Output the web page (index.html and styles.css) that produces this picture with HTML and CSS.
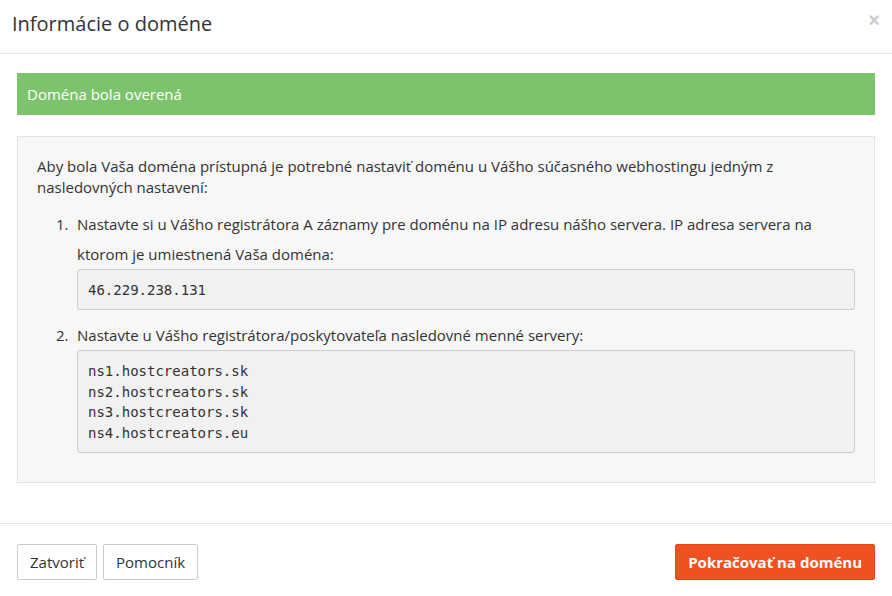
FILE: index.html
```html
<!DOCTYPE html>
<html lang="sk">
<head>
  <meta charset="UTF-8"/>
  <meta name="viewport" content="width=device-width, initial-scale=1.0"/>
  <title>Informácie o doméne</title>
  <link rel="stylesheet" href="styles.css">
</head>
<body>

  <div class="modal">
    <div class="modal-header">
      <h4 class="modal-title">Informácie o doméne</h4>
      <button class="close" type="button">&times;</button>
    </div>

    <div class="modal-body">
      <div class="alert-success">Doména bola overená</div>

      <div class="well">
        <p>Aby bola Vaša doména prístupná je potrebné nastaviť doménu u Vášho súčasného webhostingu jedným z nasledovných nastavení:</p>
        <ol class="steps">
          <li>Nastavte si u Vášho registrátora A záznamy pre doménu na IP adresu nášho servera. IP adresa servera na ktorom je umiestnená Vaša doména:
            <pre>46.229.238.131</pre>
          </li>
          <li>Nastavte u Vášho registrátora/poskytovateľa nasledovné menné servery:
            <pre>ns1.hostcreators.sk
ns2.hostcreators.sk
ns3.hostcreators.sk
ns4.hostcreators.eu</pre>
          </li>
        </ol>
      </div>
    </div>

    <div class="modal-footer">
      <div class="footer-left">
        <button class="btn" type="button">Zatvoriť</button>
        <button class="btn" type="button">Pomocník</button>
      </div>
      <button class="btn btn-primary" type="button">Pokračovať na doménu</button>
    </div>
  </div>

</body>
</html>
```

FILE: styles.css
```css
body {
  margin: 0;
  font-family: 'Open Sans', sans-serif;
  font-size: 15px;
  line-height: 1.42857;
  color: #333;
  background: #fff;
}

.modal {
  width: 892px;
  background: #fff;
}

.modal-header {
  display: flex;
  justify-content: space-between;
  align-items: flex-start;
  padding: 9px 12px 0 12px;
  height: 44px;
  border-bottom: 1px solid #e5e5e5;
}

.modal-title {
  margin: 0;
  font-size: 20px;
  font-weight: 400;
  line-height: 30px;
  color: #333;
}

.close {
  border: 0;
  background: none;
  padding: 0;
  margin-top: 1px;
  font-family: 'Liberation Sans', sans-serif;
  font-size: 20px;
  font-weight: 700;
  line-height: 1;
  color: #000;
  opacity: 0.2;
  cursor: pointer;
}

.modal-body {
  padding: 19px 17px 20px;
}

.alert-success {
  background: #7dc36d;
  color: #fff;
  padding: 10px 10px;
  line-height: 22px;
  margin-bottom: 21px;
}

.well {
  background: #f7f7f7;
  border: 1px solid #e3e3e3;
  padding: 19px;
  margin-bottom: 20px;
}

.well p {
  margin: 0 0 10px;
}

.steps {
  margin: 0;
  padding-left: 40px;
  list-style: none;
  counter-reset: step;
}

.steps li {
  line-height: 30px;
  counter-increment: step;
}

.steps li::before {
  content: counter(step) ".";
  display: inline-block;
  width: 21px;
  margin-left: -21px;
}

.steps pre {
  margin: 0 0 10px;
  padding: 10px 10px 9px;
  font-family: 'DejaVu Sans Mono', monospace;
  font-size: 14px;
  line-height: 20.5px;
  color: #333;
  background: #f1f1f1;
  border: 1px solid #ccc;
  border-radius: 3px;
}

.modal-footer {
  display: flex;
  justify-content: space-between;
  align-items: center;
  padding: 20px 17px;
  border-top: 1px solid #e5e5e5;
}

.footer-left {
  display: flex;
  gap: 6px;
}

.btn {
  font-family: 'Open Sans', sans-serif;
  font-size: 15px;
  line-height: 22px;
  padding: 6px 12px;
  color: #333;
  background: #fff;
  border: 1px solid #ccc;
  border-radius: 2px;
  cursor: pointer;
}

.btn-primary {
  background: #ef5122;
  border-color: #e44718;
  color: #fff;
  font-weight: 700;
  padding: 6px 12px;
}
```
